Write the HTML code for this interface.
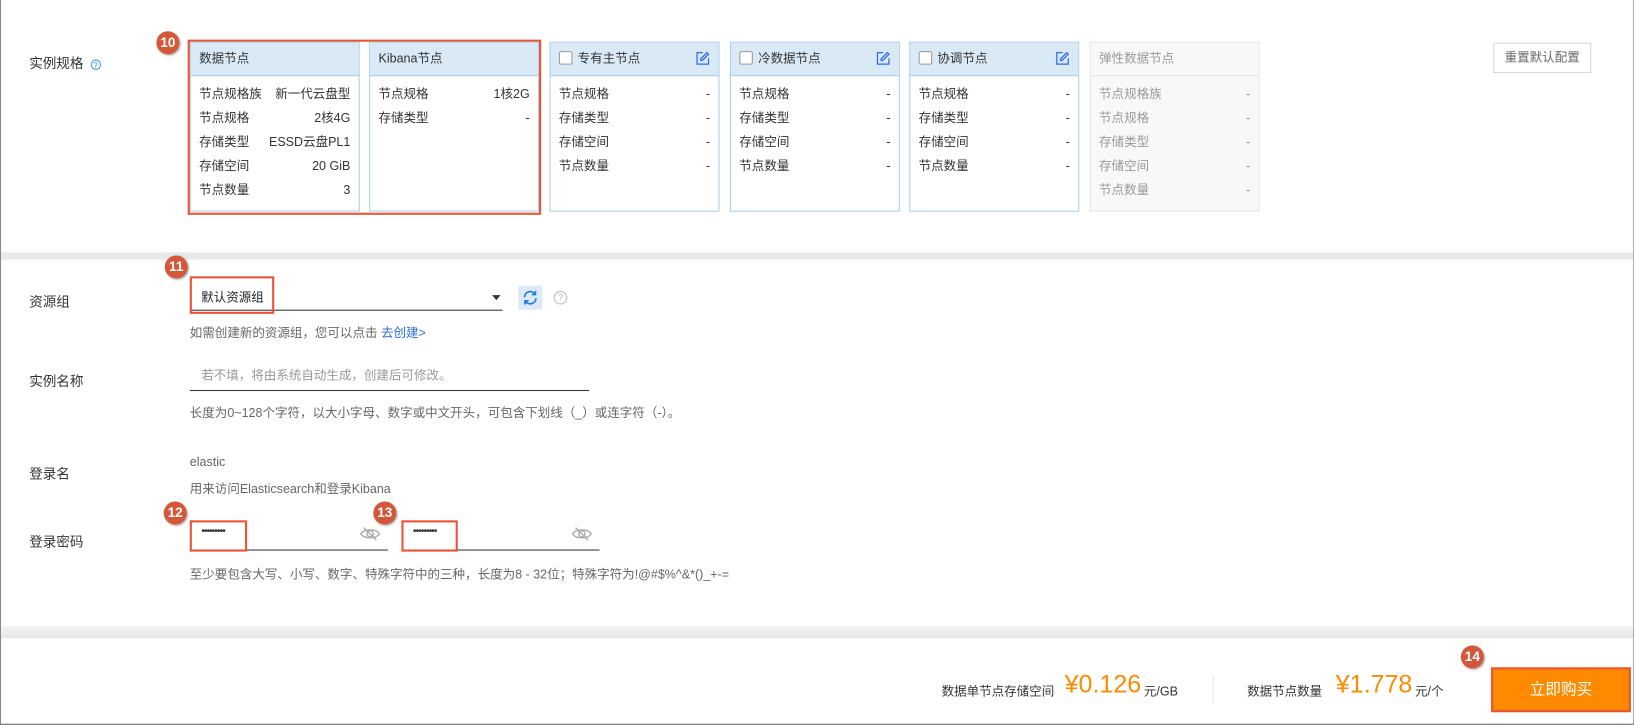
<!DOCTYPE html>
<html><head><meta charset="utf-8"><style>
*{box-sizing:border-box;margin:0;padding:0}
html,body{width:1635px;height:725px;overflow:hidden;background:#fff}
#w{width:1568px;height:696px;position:relative;transform:scale(1.04273);transform-origin:0 0;font-family:"Liberation Sans","Noto Sans CJK SC",sans-serif;font-size:12px;color:#333}
.a{position:absolute;white-space:nowrap}
.card{position:absolute;top:40px;width:163px;height:163px;border:1px solid #a9cdec;background:#fff}
.card .h{height:32px;background:#d9e9f6;border-bottom:1px solid #a9cdec;padding:0 8px;line-height:30px;position:relative}
.card .r{display:flex;justify-content:space-between;padding:0 8px;height:23px;line-height:23px}
.card .b{padding-top:6px}
.card.g{border-color:#e6e6e6;background:#f8f8f8;color:#999}
.card.g .h{background:#f8f8f8;border-bottom-color:#e6e6e6}
.cb{display:inline-block;width:13px;height:13px;border:1px solid #999;border-radius:2px;background:#fff;vertical-align:-2px;margin-right:5px}
.ed{position:absolute;right:8px;top:8px}
.badge{position:absolute;width:22px;height:22px;border-radius:50%;background:#d5573a;color:#fff;font-weight:bold;font-size:13px;text-align:center;line-height:22px;box-shadow:1px 1px 2px #999}
.red{position:absolute;border:2px solid #ea5234}
.ul{position:absolute;border-bottom:1px solid #333}
.lab{font-size:13px;color:#333}
.hint{color:#666}
</style></head><body><div id="w">
<div class="a" style="left:0;top:0;width:1px;height:696px;background:#888"></div>
<div class="a" style="left:1566px;top:0;width:1px;height:696px;background:#aaa"></div>
<div class="a" style="left:0;top:694px;width:1567px;height:2px;background:#888"></div>

<div class="a lab" style="left:28px;top:50px">实例规格 <span style="color:#3a9be8;font-size:8px;border:1px solid #3a9be8;border-radius:50%;display:inline-block;width:10px;height:10px;line-height:9px;text-align:center;margin-left:3px">?</span></div>

<div class="card" style="left:182px"><div class="h">数据节点</div><div class="b">
<div class="r"><span>节点规格族</span><span>新一代云盘型</span></div>
<div class="r"><span>节点规格</span><span>2核4G</span></div>
<div class="r"><span>存储类型</span><span>ESSD云盘PL1</span></div>
<div class="r"><span>存储空间</span><span>20 GiB</span></div>
<div class="r"><span>节点数量</span><span>3</span></div></div></div>
<div class="card" style="left:354px"><div class="h">Kibana节点</div><div class="b">
<div class="r"><span>节点规格</span><span>1核2G</span></div>
<div class="r"><span>存储类型</span><span>-</span></div></div></div>
<div class="red" style="left:180px;top:38px;width:339px;height:168px"></div>
<div class="badge" style="left:150px;top:30px">10</div>

<div class="card" style="left:527px"><div class="h"><span class="cb"></span>专有主节点<svg class="ed" width="14" height="14" viewBox="0 0 14 14"><path d="M7 1.5H1.5v11h11V7" fill="none" stroke="#2c6cf5" stroke-width="1.2"/><path d="M11 1.5l1.5 1.5-6 6H5V7.5z" fill="none" stroke="#2c6cf5" stroke-width="1.2"/></svg></div><div class="b">
<div class="r"><span>节点规格</span><span>-</span></div><div class="r"><span>存储类型</span><span>-</span></div><div class="r"><span>存储空间</span><span>-</span></div><div class="r"><span>节点数量</span><span>-</span></div></div></div>
<div class="card" style="left:700px"><div class="h"><span class="cb"></span>冷数据节点<svg class="ed" width="14" height="14" viewBox="0 0 14 14"><path d="M7 1.5H1.5v11h11V7" fill="none" stroke="#2c6cf5" stroke-width="1.2"/><path d="M11 1.5l1.5 1.5-6 6H5V7.5z" fill="none" stroke="#2c6cf5" stroke-width="1.2"/></svg></div><div class="b">
<div class="r"><span>节点规格</span><span>-</span></div><div class="r"><span>存储类型</span><span>-</span></div><div class="r"><span>存储空间</span><span>-</span></div><div class="r"><span>节点数量</span><span>-</span></div></div></div>
<div class="card" style="left:872px"><div class="h"><span class="cb"></span>协调节点<svg class="ed" width="14" height="14" viewBox="0 0 14 14"><path d="M7 1.5H1.5v11h11V7" fill="none" stroke="#2c6cf5" stroke-width="1.2"/><path d="M11 1.5l1.5 1.5-6 6H5V7.5z" fill="none" stroke="#2c6cf5" stroke-width="1.2"/></svg></div><div class="b">
<div class="r"><span>节点规格</span><span>-</span></div><div class="r"><span>存储类型</span><span>-</span></div><div class="r"><span>存储空间</span><span>-</span></div><div class="r"><span>节点数量</span><span>-</span></div></div></div>
<div class="card g" style="left:1045px"><div class="h">弹性数据节点</div><div class="b">
<div class="r"><span>节点规格族</span><span>-</span></div><div class="r"><span>节点规格</span><span>-</span></div><div class="r"><span>存储类型</span><span>-</span></div><div class="r"><span>存储空间</span><span>-</span></div><div class="r"><span>节点数量</span><span>-</span></div></div></div>
<div class="a" style="left:1432px;top:41px;width:94px;height:29px;border:1px solid #cfd8e3;color:#666;text-align:center;line-height:27px">重置默认配置</div>

<div class="a" style="left:1px;top:242px;width:1565px;height:7px;background:#e8e9eb"></div>

<div class="a lab" style="left:28px;top:279px">资源组</div>
<div class="ul" style="left:182px;top:266px;width:300px;height:32px"></div>
<div class="a" style="left:193px;top:276px;font-size:12px;color:#222">默认资源组</div>
<div class="a" style="left:472px;top:283px;border-left:4px solid transparent;border-right:4px solid transparent;border-top:5px solid #333"></div>
<div class="red" style="left:182px;top:265px;width:81px;height:36px"></div>
<div class="badge" style="left:158px;top:245px">11</div>
<div class="a" style="left:497px;top:274px;width:23px;height:23px;background:#dde9f7"><svg width="23" height="23" viewBox="0 0 23 23"><path d="M6 11a5.5 5.5 0 0 1 10-3M17 12a5.5 5.5 0 0 1-10 3" fill="none" stroke="#1a7be0" stroke-width="1.6"/><path d="M16.5 5v3.5H13M6.5 18v-3.5H10" fill="none" stroke="#1a7be0" stroke-width="1.6"/></svg></div>
<div class="a" style="left:531px;top:279px;width:13px;height:13px;border:1px solid #bbb;border-radius:50%;color:#bbb;font-size:9px;text-align:center;line-height:11px">?</div>
<div class="a hint" style="left:182px;top:310px">如需创建新的资源组，您可以点击 <span style="color:#2f6ce0">去创建&gt;</span></div>

<div class="a lab" style="left:28px;top:355px">实例名称</div>
<div class="ul" style="left:182px;top:345px;width:383px;height:30px"></div>
<div class="a" style="left:193px;top:351px;color:#999">若不填，将由系统自动生成，创建后可修改。</div>
<div class="a hint" style="left:182px;top:387px">长度为0~128个字符，以大小字母、数字或中文开头，可包含下划线（_）或连字符（-）。</div>

<div class="a lab" style="left:28px;top:444px">登录名</div>
<div class="a hint" style="left:182px;top:436px">elastic</div>
<div class="a hint" style="left:182px;top:460px">用来访问Elasticsearch和登录Kibana</div>

<div class="a lab" style="left:28px;top:509px">登录密码</div>
<div class="ul" style="left:182px;top:500px;width:190px;height:28px"></div>
<div class="ul" style="left:385px;top:500px;width:190px;height:28px"></div>
<div class="a" style="left:193px;top:504px;font-size:10px;letter-spacing:-1px">•••••••••</div>
<div class="a" style="left:396px;top:504px;font-size:10px;letter-spacing:-1px">•••••••••</div>
<svg class="a" style="left:345px;top:505px" width="20" height="14" viewBox="0 0 20 14"><path d="M1 7c3-5 15-5 18 0c-3 5-15 5-18 0z" fill="none" stroke="#aaa" stroke-width="1.3"/><circle cx="10" cy="7" r="3" fill="none" stroke="#aaa" stroke-width="1.3"/><path d="M4 1l12 12" stroke="#aaa" stroke-width="1.3"/></svg>
<svg class="a" style="left:548px;top:505px" width="20" height="14" viewBox="0 0 20 14"><path d="M1 7c3-5 15-5 18 0c-3 5-15 5-18 0z" fill="none" stroke="#aaa" stroke-width="1.3"/><circle cx="10" cy="7" r="3" fill="none" stroke="#aaa" stroke-width="1.3"/><path d="M4 1l12 12" stroke="#aaa" stroke-width="1.3"/></svg>
<div class="red" style="left:182px;top:499px;width:55px;height:30px"></div>
<div class="red" style="left:385px;top:499px;width:54px;height:30px"></div>
<div class="badge" style="left:157px;top:481px">12</div>
<div class="badge" style="left:358px;top:481px">13</div>
<div class="a hint" style="left:182px;top:542px">至少要包含大写、小写、数字、特殊字符中的三种，长度为8 - 32位；特殊字符为!@#$%^&amp;*()_+-=</div>

<div class="a" style="left:1px;top:600px;width:1565px;height:12px;background:linear-gradient(#f5f5f5,#e5e6e8)"></div>

<div class="a" style="left:903px;top:654px;color:#333">数据单节点存储空间</div>
<div class="a" style="left:1021px;top:643px;color:#ff8a00;font-size:24px">¥0.126</div>
<div class="a" style="left:1097px;top:654px;color:#333">元/GB</div>
<div class="a" style="left:1163px;top:648px;width:1px;height:26px;background:#e5e5e5"></div>
<div class="a" style="left:1196px;top:654px;color:#333">数据节点数量</div>
<div class="a" style="left:1281px;top:643px;color:#ff8a00;font-size:24px">¥1.778</div>
<div class="a" style="left:1357px;top:654px;color:#333">元/个</div>
<div class="a" style="left:1430px;top:640px;width:134px;height:43px;background:#ff8a00;border:2px solid #ea5234;color:#fff;font-size:15px;text-align:center;line-height:39px">立即购买</div>
<div class="badge" style="left:1401px;top:619px">14</div>
</div></body></html>
